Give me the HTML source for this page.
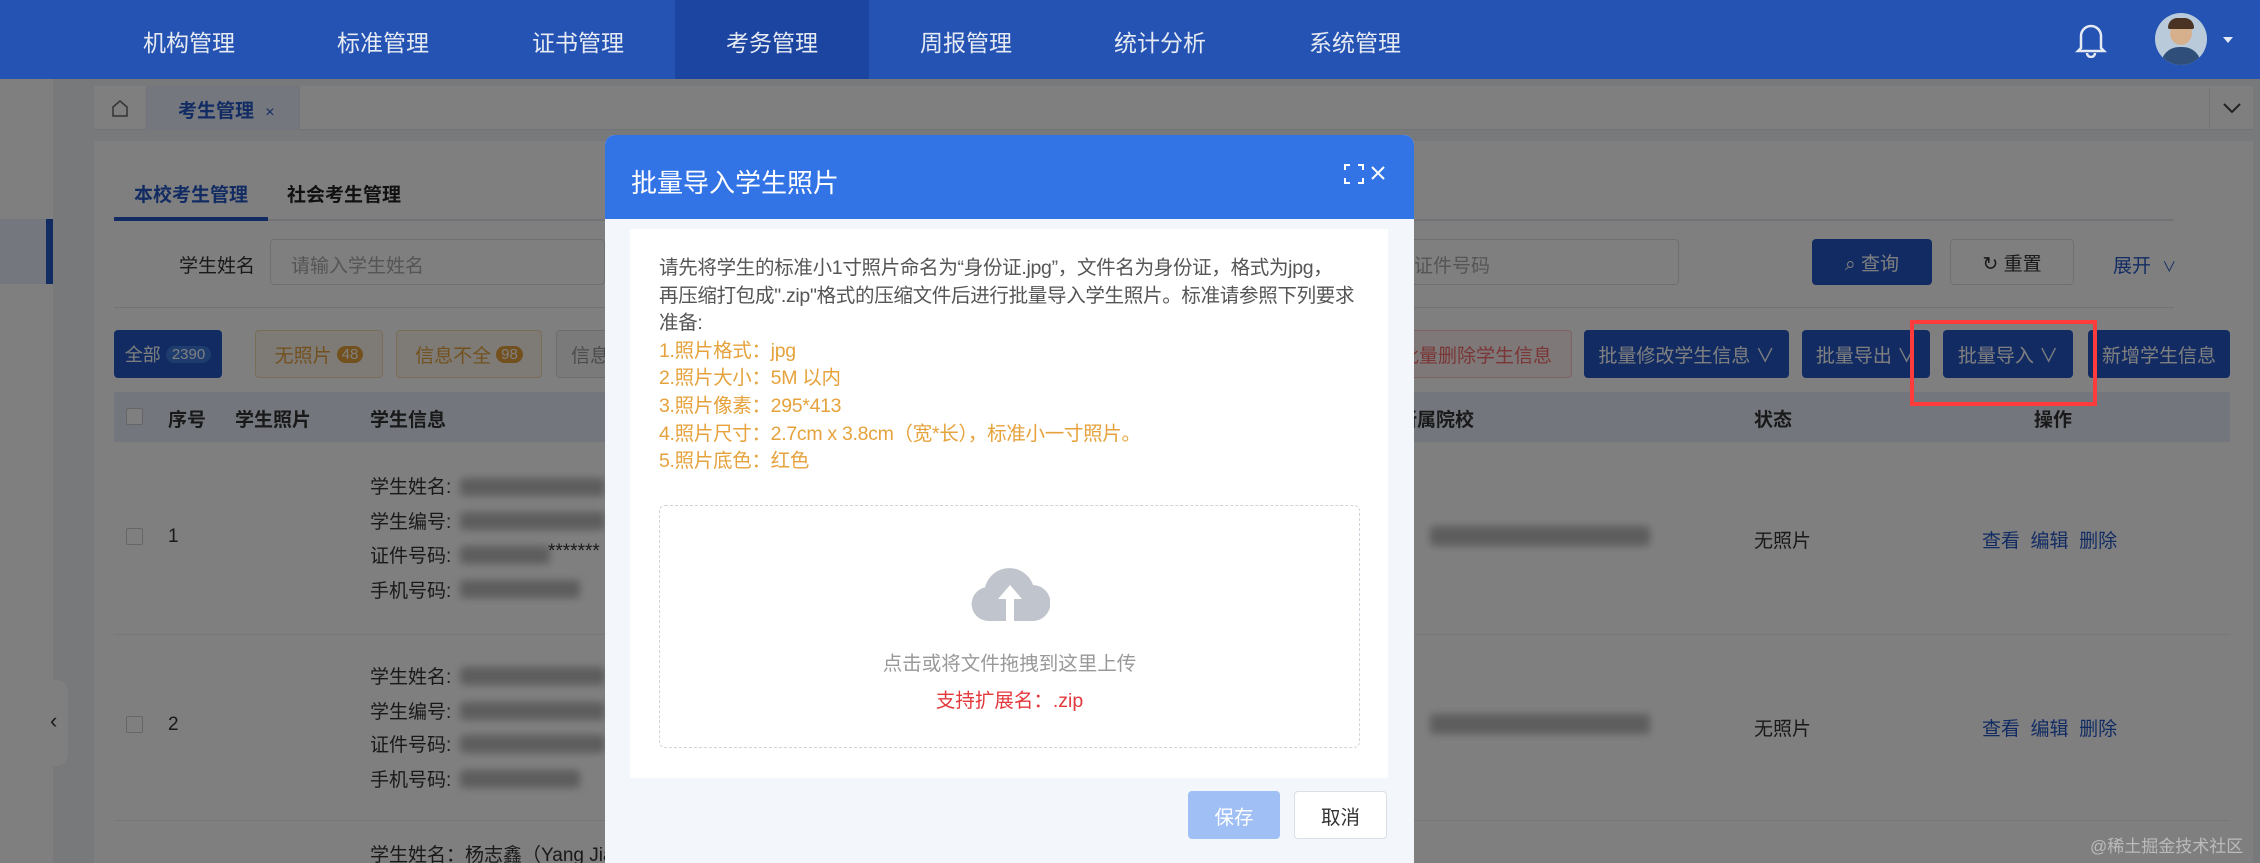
<!DOCTYPE html>
<html><head><meta charset="utf-8"><style>
*{margin:0;padding:0;box-sizing:border-box}
html,body{width:2260px;height:863px;overflow:hidden}
body{position:relative;background:#f0f2f5;font-family:"Liberation Sans","Noto Sans CJK SC",sans-serif;font-size:19px;color:#333}
.a{position:absolute;white-space:nowrap}
.nav{color:#e6eaf2;font-size:23px;top:24px}
.btn{position:absolute;border-radius:4px;display:flex;align-items:center;justify-content:center;font-size:19px}
.blue{background:#2458c6;color:#fff}
.blur{position:absolute;background:#bbb;filter:blur(4px);border-radius:4px}
.ov{position:absolute;left:0;top:79px;width:2260px;height:784px;background:rgba(0,0,0,.5)}
.lbl{color:#333}
.op{color:#2458c6}
</style></head><body>
<div class="a" style="left:0;top:0;width:2260px;height:79px;background:#2453b4"></div>
<div class="a" style="left:675px;top:0;width:194px;height:79px;background:#1c45a2"></div>
<div class="a nav" style="left:143px">机构管理</div>
<div class="a nav" style="left:337px">标准管理</div>
<div class="a nav" style="left:532px">证书管理</div>
<div class="a nav" style="left:726px">考务管理</div>
<div class="a nav" style="left:920px">周报管理</div>
<div class="a nav" style="left:1114px">统计分析</div>
<div class="a nav" style="left:1309px">系统管理</div>
<svg class="a" style="left:2073px;top:20px" width="36" height="38" viewBox="0 0 36 38"><path d="M8 28V16a10 10 0 0 1 20 0v12l3 3H5z M14 33a4 4 0 0 0 8 0" fill="none" stroke="#e6eaf2" stroke-width="2.5"/></svg>
<div class="a" style="left:2155px;top:13px;width:52px;height:52px;border-radius:50%;background:#b9cadb;overflow:hidden"><div style="position:absolute;left:15px;top:8px;width:22px;height:24px;border-radius:50%;background:#d6b08c"></div><div style="position:absolute;left:13px;top:5px;width:26px;height:11px;border-radius:12px 12px 2px 2px;background:#4a3323"></div><div style="position:absolute;left:6px;top:34px;width:40px;height:24px;border-radius:18px 18px 0 0;background:#2f4f7a"></div></div>
<div class="a" style="left:2223px;top:37px;width:0;height:0;border-left:5px solid transparent;border-right:5px solid transparent;border-top:6px solid #e6eaf2"></div>
<div class="a" style="left:0;top:79px;width:53px;height:784px;background:#fff"></div>
<div class="a" style="left:0;top:219px;width:53px;height:65px;background:#e8f0fc"></div>
<div class="a" style="left:46px;top:219px;width:7px;height:65px;background:#2458c6"></div>
<div class="a" style="left:44px;top:680px;width:24px;height:86px;border-radius:0 12px 12px 0;background:#fff"></div>
<div class="a" style="left:50px;top:708px;font-size:22px;color:#333">‹</div>
<div class="a" style="left:94px;top:86px;width:2159px;height:44px;background:#fff;border-bottom:1px solid #e4e7ed"></div>
<div class="a" style="left:94px;top:86px;width:53px;height:44px;border-right:1px solid #e4e7ed;display:flex;align-items:center;justify-content:center"><svg width="20" height="20" viewBox="0 0 20 20"><path d="M3 9l7-6 7 6v9H3z" fill="none" stroke="#666" stroke-width="1.5"/></svg></div>
<div class="a" style="left:147px;top:86px;width:153px;height:44px;background:#e8f0fc;border-right:1px solid #e4e7ed"></div>
<div class="a" style="left:178px;top:96px;color:#2458c6;font-weight:bold;font-size:19px">考生管理 <span style="font-weight:normal;font-size:16px;color:#2458c6;margin-left:6px">×</span></div>
<div class="a" style="left:2209px;top:88px;width:44px;height:40px;border-left:1px solid #e4e7ed;display:flex;align-items:center;justify-content:center"><svg width="20" height="12"><path d="M2 2l8 8 8-8" fill="none" stroke="#444" stroke-width="2"/></svg></div>
<div class="a" style="left:94px;top:141px;width:2159px;height:722px;background:#fff"></div>
<div class="a" style="left:134px;top:180px;color:#2458c6;font-weight:bold;font-size:19px">本校考生管理</div>
<div class="a" style="left:287px;top:180px;color:#222;font-weight:bold;font-size:19px">社会考生管理</div>
<div class="a" style="left:114px;top:219px;width:2060px;height:2px;background:#e4e7ed"></div>
<div class="a" style="left:114px;top:217px;width:154px;height:4px;background:#2458c6"></div>
<div class="a lbl" style="left:179px;top:251px">学生姓名</div>
<div class="a" style="left:270px;top:239px;width:335px;height:46px;border:1px solid #dcdfe6;border-radius:4px"></div>
<div class="a" style="left:291px;top:251px;color:#aaa">请输入学生姓名</div>
<div class="a" style="left:1380px;top:239px;width:299px;height:46px;border:1px solid #dcdfe6;border-radius:4px"></div>
<div class="a" style="left:1414px;top:251px;color:#aaa">证件号码</div>
<div class="btn blue" style="left:1812px;top:239px;width:120px;height:46px">⌕&nbsp;查询</div>
<div class="btn" style="left:1950px;top:239px;width:124px;height:46px;border:1px solid #dcdfe6;color:#333">↻&nbsp;重置</div>
<div class="a op" style="left:2113px;top:251px">展开 <span style="font-size:14px;margin-left:6px">∨</span></div>
<div class="a" style="left:114px;top:307px;width:2060px;height:1px;background:#e4e7ed"></div>
<div class="btn blue" style="left:114px;top:330px;width:108px;height:48px;font-size:18px">全部 <span style="background:#3e78dc;border-radius:10px;padding:0 6px;font-size:15px;margin-left:5px">2390</span></div>
<div class="btn" style="left:255px;top:330px;width:128px;height:48px;background:#fdf6ec;border:1px solid #f5dab1;color:#e6a23c">无照片 <span style="background:#e6a23c;color:#fff;border-radius:10px;padding:0 5px;font-size:15px;margin-left:5px">48</span></div>
<div class="btn" style="left:396px;top:330px;width:146px;height:48px;background:#fdf6ec;border:1px solid #f5dab1;color:#e6a23c">信息不全 <span style="background:#e6a23c;color:#fff;border-radius:10px;padding:0 5px;font-size:15px;margin-left:5px">98</span></div>
<div class="btn" style="left:556px;top:330px;width:80px;height:48px;background:#f4f4f5;border:1px solid #ddd;color:#999;justify-content:flex-start;padding-left:14px">信息</div>
<div class="btn" style="left:1380px;top:330px;width:192px;height:48px;background:#fef0f0;border:1px solid #fbc4c4;color:#f56c6c">批量删除学生信息</div>
<div class="btn blue" style="left:1584px;top:330px;width:205px;height:48px">批量修改学生信息 ∨</div>
<div class="btn blue" style="left:1802px;top:330px;width:128px;height:48px">批量导出 ∨</div>
<div class="btn blue" style="left:1943px;top:330px;width:130px;height:48px">批量导入 ∨</div>
<div class="btn blue" style="left:2088px;top:330px;width:142px;height:48px">新增学生信息</div>
<div class="a" style="left:114px;top:392px;width:2116px;height:50px;background:#e6eefa"></div>
<div class="a" style="left:126px;top:408px;width:17px;height:17px;border:1px solid #ccc;background:#fff;border-radius:2px"></div>
<div class="a" style="left:168px;top:405px;font-weight:bold">序号</div>
<div class="a" style="left:235px;top:405px;font-weight:bold">学生照片</div>
<div class="a" style="left:370px;top:405px;font-weight:bold">学生信息</div>
<div class="a" style="left:1398px;top:405px;font-weight:bold">所属院校</div>
<div class="a" style="left:1754px;top:405px;font-weight:bold">状态</div>
<div class="a" style="left:2034px;top:405px;font-weight:bold">操作</div>
<div class="a" style="left:114px;top:634px;width:2116px;height:1px;background:#ebeef5"></div>
<div class="a" style="left:114px;top:820px;width:2116px;height:1px;background:#ebeef5"></div>
<div class="a" style="left:126px;top:528px;width:17px;height:17px;border:1px solid #ccc;border-radius:2px"></div>
<div class="a" style="left:168px;top:526px">1</div>
<div class="a" style="left:370px;top:472px">学生姓名:</div>
<div class="a" style="left:370px;top:507px">学生编号:</div>
<div class="a" style="left:370px;top:541px">证件号码:</div>
<div class="a" style="left:370px;top:576px">手机号码:</div>
<div class="blur" style="left:460px;top:478px;width:145px;height:18px"></div>
<div class="blur" style="left:460px;top:512px;width:145px;height:18px"></div>
<div class="blur" style="left:460px;top:546px;width:90px;height:18px"></div>
<div class="a" style="left:548px;top:541px">*******</div>
<div class="blur" style="left:460px;top:580px;width:120px;height:18px"></div>
<div class="blur" style="left:1430px;top:526px;width:220px;height:20px"></div>
<div class="a" style="left:1754px;top:526px">无照片</div>
<div class="a op" style="left:1982px;top:526px">查看&nbsp;&nbsp;编辑&nbsp;&nbsp;删除</div>
<div class="a" style="left:126px;top:716px;width:17px;height:17px;border:1px solid #ccc;border-radius:2px"></div>
<div class="a" style="left:168px;top:714px">2</div>
<div class="a" style="left:370px;top:662px">学生姓名:</div>
<div class="a" style="left:370px;top:697px">学生编号:</div>
<div class="a" style="left:370px;top:730px">证件号码:</div>
<div class="a" style="left:370px;top:765px">手机号码:</div>
<div class="blur" style="left:460px;top:667px;width:145px;height:18px"></div>
<div class="blur" style="left:460px;top:702px;width:145px;height:18px"></div>
<div class="blur" style="left:460px;top:735px;width:145px;height:18px"></div>
<div class="blur" style="left:460px;top:770px;width:120px;height:18px"></div>
<div class="blur" style="left:1430px;top:714px;width:220px;height:20px"></div>
<div class="a" style="left:1754px;top:714px">无照片</div>
<div class="a op" style="left:1982px;top:714px">查看&nbsp;&nbsp;编辑&nbsp;&nbsp;删除</div>
<div class="a" style="left:370px;top:840px">学生姓名：杨志鑫（Yang Jia</div>
<div class="ov"></div>
<div class="a" style="left:2090px;top:832px;color:#bbb;font-size:17px">@稀土掘金技术社区</div>
<div class="a" style="left:1910px;top:320px;width:187px;height:86px;border:4px solid #ff3b3b"></div>
<div class="a" style="left:605px;top:135px;width:809px;height:728px;background:#f3f6fa;border-radius:10px 10px 0 0;overflow:hidden">
 <div style="position:absolute;left:0;top:0;width:809px;height:84px;background:#3273e6"></div>
 <div style="position:absolute;left:26px;top:28px;color:#fff;font-size:26px">批量导入学生照片</div>
 <svg style="position:absolute;left:738px;top:28px" width="22" height="22" viewBox="0 0 22 22"><path d="M2 7V2h5M15 2h5v5M20 15v5h-5M7 20H2v-5" fill="none" stroke="#fff" stroke-width="2"/></svg>
 <svg style="position:absolute;left:764px;top:29px" width="18" height="18" viewBox="0 0 18 18"><path d="M3 3l12 12M15 3L3 15" stroke="#fff" stroke-width="2"/></svg>
 <div style="position:absolute;left:25px;top:94px;width:758px;height:549px;background:#fff"></div>
 <div style="position:absolute;left:54px;top:120px;font-size:19.5px;line-height:27.6px;color:#555;white-space:nowrap;letter-spacing:-0.3px">请先将学生的标准小1寸照片命名为“身份证.jpg”，文件名为身份证，格式为jpg，<br>再压缩打包成".zip"格式的压缩文件后进行批量导入学生照片。标准请参照下列要求<br>准备:
 <div style="color:#e6a23c">1.照片格式：jpg<br>2.照片大小：5M 以内<br>3.照片像素：295*413<br>4.照片尺寸：2.7cm x 3.8cm（宽*长），标准小一寸照片。<br>5.照片底色：红色</div></div>
 <div style="position:absolute;left:54px;top:370px;width:701px;height:243px;border:1px dashed #d0d4da;border-radius:6px"></div>
 <svg style="position:absolute;left:365px;top:426px" width="80" height="62" viewBox="0 0 80 62"><path d="M18 60a17 17 0 0 1-3-33.6A25 25 0 0 1 63 24a18 18 0 0 1-1 36z" fill="#c0c4cc"/><path d="M40 24L28 38h8v22h8V38h8z" fill="#fff"/></svg>
 <div style="position:absolute;left:0;width:809px;top:512px;text-align:center;color:#999;font-size:19.5px">点击或将文件拖拽到这里上传</div>
 <div style="position:absolute;left:0;width:809px;top:549px;text-align:center;color:#e4393c;font-size:19.5px">支持扩展名：.zip</div>
 <div style="position:absolute;left:583px;top:656px;width:92px;height:48px;background:#a0bff5;border-radius:4px;color:#fff;display:flex;align-items:center;justify-content:center;font-size:19.5px">保存</div>
 <div style="position:absolute;left:689px;top:656px;width:93px;height:48px;background:#fff;border:1px solid #dcdfe6;border-radius:4px;color:#333;display:flex;align-items:center;justify-content:center;font-size:19.5px">取消</div>
</div>
</body></html>
